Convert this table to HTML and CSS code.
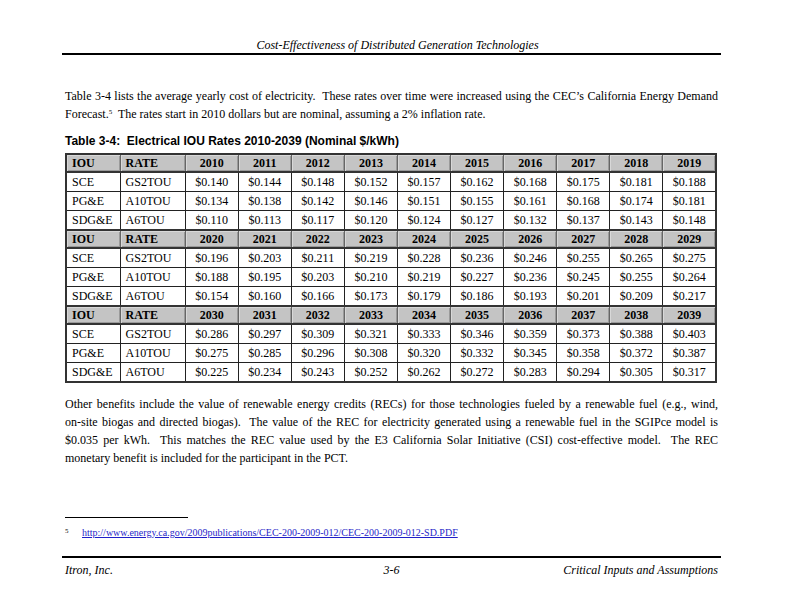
FILE: index.html
```html
<!DOCTYPE html>
<html>
<head>
<meta charset="utf-8">
<link rel="stylesheet" href="styles.css">
</head>
<body>
<div class="page">
  <header class="running-head">
    <div class="head-title">Cost-Effectiveness of Distributed Generation Technologies</div>
  </header>

  <p class="para para-first">Table 3-4 lists the average yearly cost of electricity.&nbsp; These rates over time were increased using the CEC’s California Energy Demand Forecast.<sup>5</sup>&nbsp; The rates start in 2010 dollars but are nominal, assuming a 2% inflation rate.</p>

  <div class="caption">Table 3-4:&nbsp; Electrical IOU Rates 2010-2039 (Nominal $/kWh)</div>

  <table class="rates">
    <colgroup>
      <col class="c-iou"><col class="c-rate">
      <col><col><col><col><col><col><col><col><col><col>
    </colgroup>
    <tbody>
      <tr class="hdr"><th class="l">IOU</th><th class="l">RATE</th><th>2010</th><th>2011</th><th>2012</th><th>2013</th><th>2014</th><th>2015</th><th>2016</th><th>2017</th><th>2018</th><th>2019</th></tr>
      <tr><td class="l">SCE</td><td class="l">GS2TOU</td><td>$0.140</td><td>$0.144</td><td>$0.148</td><td>$0.152</td><td>$0.157</td><td>$0.162</td><td>$0.168</td><td>$0.175</td><td>$0.181</td><td>$0.188</td></tr>
      <tr><td class="l">PG&amp;E</td><td class="l">A10TOU</td><td>$0.134</td><td>$0.138</td><td>$0.142</td><td>$0.146</td><td>$0.151</td><td>$0.155</td><td>$0.161</td><td>$0.168</td><td>$0.174</td><td>$0.181</td></tr>
      <tr><td class="l">SDG&amp;E</td><td class="l">A6TOU</td><td>$0.110</td><td>$0.113</td><td>$0.117</td><td>$0.120</td><td>$0.124</td><td>$0.127</td><td>$0.132</td><td>$0.137</td><td>$0.143</td><td>$0.148</td></tr>
      <tr class="hdr"><th class="l">IOU</th><th class="l">RATE</th><th>2020</th><th>2021</th><th>2022</th><th>2023</th><th>2024</th><th>2025</th><th>2026</th><th>2027</th><th>2028</th><th>2029</th></tr>
      <tr><td class="l">SCE</td><td class="l">GS2TOU</td><td>$0.196</td><td>$0.203</td><td>$0.211</td><td>$0.219</td><td>$0.228</td><td>$0.236</td><td>$0.246</td><td>$0.255</td><td>$0.265</td><td>$0.275</td></tr>
      <tr><td class="l">PG&amp;E</td><td class="l">A10TOU</td><td>$0.188</td><td>$0.195</td><td>$0.203</td><td>$0.210</td><td>$0.219</td><td>$0.227</td><td>$0.236</td><td>$0.245</td><td>$0.255</td><td>$0.264</td></tr>
      <tr><td class="l">SDG&amp;E</td><td class="l">A6TOU</td><td>$0.154</td><td>$0.160</td><td>$0.166</td><td>$0.173</td><td>$0.179</td><td>$0.186</td><td>$0.193</td><td>$0.201</td><td>$0.209</td><td>$0.217</td></tr>
      <tr class="hdr"><th class="l">IOU</th><th class="l">RATE</th><th>2030</th><th>2031</th><th>2032</th><th>2033</th><th>2034</th><th>2035</th><th>2036</th><th>2037</th><th>2038</th><th>2039</th></tr>
      <tr><td class="l">SCE</td><td class="l">GS2TOU</td><td>$0.286</td><td>$0.297</td><td>$0.309</td><td>$0.321</td><td>$0.333</td><td>$0.346</td><td>$0.359</td><td>$0.373</td><td>$0.388</td><td>$0.403</td></tr>
      <tr><td class="l">PG&amp;E</td><td class="l">A10TOU</td><td>$0.275</td><td>$0.285</td><td>$0.296</td><td>$0.308</td><td>$0.320</td><td>$0.332</td><td>$0.345</td><td>$0.358</td><td>$0.372</td><td>$0.387</td></tr>
      <tr><td class="l">SDG&amp;E</td><td class="l">A6TOU</td><td>$0.225</td><td>$0.234</td><td>$0.243</td><td>$0.252</td><td>$0.262</td><td>$0.272</td><td>$0.283</td><td>$0.294</td><td>$0.305</td><td>$0.317</td></tr>
    </tbody>
  </table>

  <p class="para para-second">Other benefits include the value of renewable energy credits (RECs) for those technologies fueled by a renewable fuel (e.g., wind, <span class="nw">on-site</span> biogas and directed biogas).&nbsp; The value of the REC for electricity generated using a renewable fuel in the SGIPce model is <span class="nw">$0.035 per</span> kWh.&nbsp; This matches the REC value used by the E3 California Solar Initiative (CSI) cost-effective model.&nbsp; The REC <span class="nw">monetary benefit</span> is included for the participant in the PCT.</p>

  <div class="footnotes">
    <div class="fn-rule"></div>
    <div class="fn"><span class="fn-num">5</span><a class="fn-link" href="#">http://www.energy.ca.gov/2009publications/CEC-200-2009-012/CEC-200-2009-012-SD.PDF</a></div>
  </div>

  <footer class="running-foot">
    <span class="foot-left">Itron, Inc.</span>
    <span class="foot-center">3-6</span>
    <span class="foot-right">Critical Inputs and Assumptions</span>
  </footer>
</div>
</body>
</html>
```

FILE: styles.css
```css
html, body {
  margin: 0;
  padding: 0;
  background: #ffffff;
}

.page {
  width: 792px;
  height: 612px;
  box-sizing: border-box;
  padding: 38px 74px 0 65px;
  font-family: "Liberation Serif", "Times New Roman", serif;
  color: #000;
  display: flex;
  flex-direction: column;
}

.running-head {
  margin: 0 -3px 0 -3px;
  border-bottom: 2px solid #000;
  padding-bottom: 1px;
}

.head-title {
  text-align: center;
  font-style: italic;
  font-size: 12px;
  line-height: 14px;
  padding-left: 12px;
}

.para {
  margin: 0;
  font-size: 12px;
  line-height: 18px;
  text-align: justify;
}

.para-first {
  margin-top: 32px;
}

.para sup {
  font-size: 7px;
  line-height: 0;
  vertical-align: 4px;
}

.nw { white-space: nowrap; }

.caption {
  margin-top: 11px;
  font-family: "Liberation Sans", Arial, sans-serif;
  font-weight: bold;
  font-size: 12px;
  line-height: 14px;
}

.rates {
  margin-top: 5px;
  width: 652px;
  border-collapse: collapse;
  table-layout: fixed;
  border: 2px solid #333;
  font-size: 12px;
}

.rates col { width: 53px; }
.rates col.c-iou { width: 54px; }
.rates col.c-rate { width: 65px; }

.rates th, .rates td {
  height: 18px;
  padding: 0 2px;
  border: 1px solid #222;
  text-align: center;
  line-height: 14px;
  white-space: nowrap;
}

.rates .l {
  text-align: left;
  padding-left: 5px;
}

.rates tr.hdr th {
  height: 16px;
  background: #c4c4c4;
  font-weight: bold;
  border-top: 2px solid #333;
  border-bottom: 2px solid #333;
  border-left: 1px solid #666;
  border-right: 1px solid #666;
  box-shadow: inset 1px 1px 0 #d8d8d8, inset -1px -1px 0 #9a9a9a;
}

.para-second {
  margin-top: 12px;
}

.footnotes {
  margin-top: 50px;
}

.fn-rule {
  width: 123px;
  border-top: 1px solid #000;
}

.fn {
  margin-top: 9px;
  font-size: 10px;
  line-height: 12px;
  display: flex;
}

.fn-num {
  width: 17px;
  font-size: 7px;
  line-height: 8px;
}

.fn-link {
  color: #1f1fc8;
  text-decoration: underline;
}

.running-foot {
  margin: 17px -3px 0 -3px;
  border-top: 2px solid #000;
  padding: 5px 3px 0 3px;
  display: flex;
  justify-content: space-between;
  font-style: italic;
  font-size: 12px;
  line-height: 14px;
}

.foot-left, .foot-right { flex: 1; }
.foot-right { text-align: right; }
```
